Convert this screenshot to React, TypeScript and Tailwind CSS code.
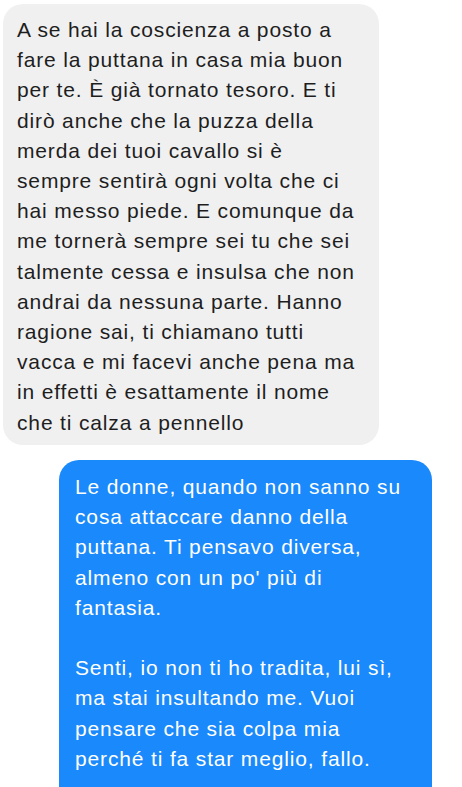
import React from "react";

const grayLines = [
  "A se hai la coscienza a posto a",
  "fare la puttana in casa mia buon",
  "per te. È già tornato tesoro. E ti",
  "dirò anche che la puzza della",
  "merda dei tuoi cavallo si è",
  "sempre sentirà ogni volta che ci",
  "hai messo piede. E comunque da",
  "me tornerà sempre sei tu che sei",
  "talmente cessa e insulsa che non",
  "andrai da nessuna parte. Hanno",
  "ragione sai, ti chiamano tutti",
  "vacca e mi facevi anche pena ma",
  "in effetti è esattamente il nome",
  "che ti calza a pennello",
];

const blueLines = [
  "Le donne, quando non sanno su",
  "cosa attaccare danno della",
  "puttana. Ti pensavo diversa,",
  "almeno con un po' più di",
  "fantasia.",
  "\u00a0",
  "Senti, io non ti ho tradita, lui sì,",
  "ma stai insultando me. Vuoi",
  "pensare che sia colpa mia",
  "perché ti fa star meglio, fallo.",
];

export default function App() {
  return (
    <div
      className="w-[462px] h-[787px] overflow-hidden bg-white flex flex-col"
      style={{ fontFamily: '"Liberation Sans", Arial, sans-serif' }}
    >
      <div className="pt-[4px] pl-[3px]">
        <div className="w-[376px] h-[441px] rounded-[20px] bg-[#f0f0f1] pl-[14px] pt-[11px] text-[21px] leading-[30.2px] tracking-[0.85px] text-[#1e1e1e] whitespace-nowrap">
          {grayLines.map((l, i) => (
            <div key={i}>{l}</div>
          ))}
        </div>
      </div>
      <div className="pt-[15px] pl-[59px]">
        <div className="w-[373px] h-[340px] rounded-t-[20px] bg-[#1a89fb] pl-[16px] pt-[12px] text-[21px] leading-[30.2px] tracking-[0.85px] text-white whitespace-nowrap">
          {blueLines.map((l, i) => (
            <div key={i}>{l}</div>
          ))}
        </div>
      </div>
    </div>
  );
}
